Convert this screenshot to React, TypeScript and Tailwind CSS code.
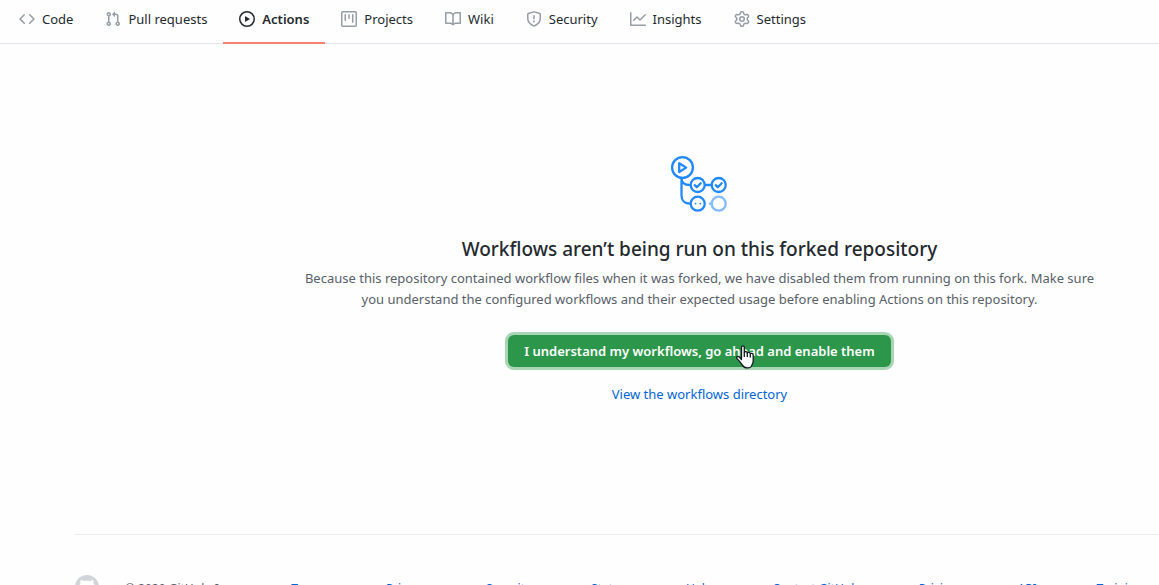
import type { ReactNode } from "react";

const icons = {
  code: "M4.72 3.22a.75.75 0 011.06 1.06L2.06 8l3.72 3.72a.75.75 0 11-1.06 1.06L.47 8.53a.75.75 0 010-1.06l4.25-4.25zm6.56 0a.75.75 0 10-1.06 1.06L13.94 8l-3.72 3.72a.75.75 0 101.06 1.06l4.25-4.25a.75.75 0 000-1.06l-4.25-4.25z",
  pull: "M7.177 3.073L9.573.677A.25.25 0 0110 .854v4.792a.25.25 0 01-.427.177L7.177 3.427a.25.25 0 010-.354zM3.75 2.5a.75.75 0 100 1.5.75.75 0 000-1.5zm-2.25.75a2.25 2.25 0 113 2.122v5.256a2.251 2.251 0 11-1.5 0V5.372A2.25 2.25 0 011.5 3.25zM11 2.5h-1V4h1a1 1 0 011 1v5.628a2.251 2.251 0 101.5 0V5A2.5 2.5 0 0011 2.5zm1 10.25a.75.75 0 111.5 0 .75.75 0 01-1.5 0zM3.75 12a.75.75 0 100 1.5.75.75 0 000-1.5z",
  play: "M1.5 8a6.5 6.5 0 1113 0 6.5 6.5 0 01-13 0zM8 0a8 8 0 100 16A8 8 0 008 0zM6.379 5.227A.25.25 0 006 5.442v5.117a.25.25 0 00.379.214l4.264-2.559a.25.25 0 000-.428L6.379 5.227z",
  project:
    "M1.75 0A1.75 1.75 0 000 1.75v12.5C0 15.216.784 16 1.75 16h12.5A1.75 1.75 0 0016 14.25V1.75A1.75 1.75 0 0014.25 0H1.75zM1.5 1.75a.25.25 0 01.25-.25h12.5a.25.25 0 01.25.25v12.5a.25.25 0 01-.25.25H1.75a.25.25 0 01-.25-.25V1.75zM11.75 3a.75.75 0 00-.75.75v7.5a.75.75 0 001.5 0v-7.5a.75.75 0 00-.75-.75zm-8.25.75a.75.75 0 011.5 0v5.5a.75.75 0 01-1.5 0v-5.5zM8 3a.75.75 0 00-.75.75v3.5a.75.75 0 001.5 0v-3.5A.75.75 0 008 3z",
  book: "M0 1.75A.75.75 0 01.75 1h4.253c1.227 0 2.317.59 3 1.501A3.744 3.744 0 0111.006 1h4.245a.75.75 0 01.75.75v10.5a.75.75 0 01-.75.75h-4.507a2.25 2.25 0 00-1.591.659l-.622.621a.75.75 0 01-1.06 0l-.622-.621A2.25 2.25 0 005.258 13H.75a.75.75 0 01-.75-.75V1.75zm8.755 3a2.25 2.25 0 012.25-2.25H14.5v9h-3.757c-.71 0-1.4.201-1.992.572l.004-7.322zm-1.504 7.324l.004-5.073-.002-2.253A2.25 2.25 0 005.003 2.5H1.5v9h3.757a3.75 3.75 0 011.994.574z",
  shield:
    "M7.467.133a1.75 1.75 0 011.066 0l5.25 1.68A1.75 1.75 0 0115 3.48V7c0 1.566-.32 3.182-1.303 4.682-.983 1.498-2.585 2.813-5.032 3.855a1.7 1.7 0 01-1.33 0c-2.447-1.042-4.049-2.357-5.032-3.855C1.32 10.182 1 8.566 1 7V3.48a1.75 1.75 0 011.217-1.667l5.25-1.68zm.61 1.429a.25.25 0 00-.153 0l-5.25 1.68a.25.25 0 00-.174.238V7c0 1.358.275 2.666 1.057 3.86.784 1.194 2.121 2.34 4.366 3.297a.2.2 0 00.154 0c2.245-.956 3.582-2.104 4.366-3.298C13.225 9.666 13.5 8.36 13.5 7V3.48a.25.25 0 00-.174-.237l-5.25-1.68zM9 10.5a1 1 0 11-2 0 1 1 0 012 0zm-.25-5.75a.75.75 0 10-1.5 0v3a.75.75 0 001.5 0v-3z",
  graph:
    "M1.5 1.75a.75.75 0 00-1.5 0v12.5c0 .414.336.75.75.75h14.5a.75.75 0 000-1.5H1.5V1.75zm14.28 2.53a.75.75 0 00-1.06-1.06L10 7.94 7.53 5.47a.75.75 0 00-1.06 0L3.22 8.72a.75.75 0 001.06 1.06L7 7.06l2.47 2.47a.75.75 0 001.06 0l5.25-5.25z",
  gear: "M7.429 1.525a6.593 6.593 0 011.142 0c.036.003.108.036.137.146l.289 1.105c.147.56.55.967.997 1.189.174.086.341.183.501.29.417.278.97.423 1.53.27l1.102-.303c.11-.03.175.016.195.046.219.31.41.641.573.989.014.031.022.11-.059.19l-.815.806c-.411.406-.562.957-.53 1.456a4.588 4.588 0 010 .582c-.032.499.119 1.05.53 1.456l.815.806c.08.08.073.159.059.19a6.494 6.494 0 01-.573.99c-.02.029-.086.074-.195.045l-1.103-.303c-.559-.153-1.112-.008-1.529.27-.16.107-.327.204-.5.29-.449.222-.851.628-.998 1.189l-.289 1.105c-.029.11-.101.143-.137.146a6.613 6.613 0 01-1.142 0c-.036-.003-.108-.037-.137-.146l-.289-1.105c-.147-.56-.55-.967-.997-1.189a4.502 4.502 0 01-.501-.29c-.417-.278-.97-.423-1.53-.27l-1.102.303c-.11.03-.175-.016-.195-.046a6.492 6.492 0 01-.573-.989c-.014-.031-.022-.11.059-.19l.815-.806c.411-.406.562-.957.53-1.456a4.587 4.587 0 010-.582c.032-.499-.119-1.05-.53-1.456l-.815-.806c-.08-.08-.073-.159-.059-.19a6.44 6.44 0 01.573-.99c.02-.029.086-.075.195-.045l1.103.303c.559.153 1.112.008 1.529-.27.16-.107.327-.204.5-.29.449-.222.851-.628.998-1.189l.289-1.105c.029-.11.101-.143.137-.146zM8 0c-.236 0-.47.01-.701.03-.743.065-1.29.615-1.458 1.261l-.29 1.106c-.017.066-.078.158-.211.224a5.994 5.994 0 00-.668.386c-.123.082-.233.09-.3.071L3.27 2.776c-.644-.177-1.392.02-1.82.63a7.977 7.977 0 00-.704 1.217c-.315.675-.111 1.422.363 1.891l.815.806c.05.048.098.147.088.294a6.084 6.084 0 000 .772c.01.147-.038.246-.088.294l-.815.806c-.474.469-.678 1.216-.363 1.891.2.428.436.835.704 1.218.428.609 1.176.806 1.82.63l1.103-.303c.066-.019.176-.011.299.071.213.143.436.272.668.386.133.066.194.158.212.224l.289 1.106c.169.646.715 1.196 1.458 1.26a8.094 8.094 0 001.402 0c.743-.064 1.29-.614 1.458-1.26l.29-1.106c.017-.066.078-.158.211-.224a5.98 5.98 0 00.668-.386c.123-.082.233-.09.3-.071l1.102.302c.644.177 1.392-.02 1.82-.63.268-.382.505-.789.704-1.217.315-.675.111-1.422-.364-1.891l-.814-.806c-.05-.048-.098-.147-.088-.294a6.1 6.1 0 000-.772c-.01-.147.039-.246.088-.294l.814-.806c.475-.469.679-1.216.364-1.891a7.992 7.992 0 00-.704-1.218c-.428-.609-1.176-.806-1.82-.63l-1.103.303c-.066.019-.176.011-.299-.071a5.991 5.991 0 00-.668-.386c-.133-.066-.194-.158-.212-.224L10.16 1.29C9.99.645 9.444.095 8.701.031A8.094 8.094 0 008 0zm1.5 8a1.5 1.5 0 11-3 0 1.5 1.5 0 013 0zM11 8a3 3 0 11-6 0 3 3 0 016 0z",
  mark: "M8 0C3.58 0 0 3.58 0 8c0 3.54 2.29 6.53 5.47 7.59.4.07.55-.17.55-.38 0-.19-.01-.82-.01-1.49-2.01.37-2.53-.49-2.69-.94-.09-.23-.48-.94-.82-1.13-.28-.15-.68-.52-.01-.53.63-.01 1.08.58 1.23.82.72 1.21 1.87.87 2.33.66.07-.52.28-.87.51-1.07-1.78-.2-3.64-.89-3.64-3.95 0-.87.31-1.59.82-2.15-.08-.2-.36-1.02.08-2.12 0 0 .67-.21 2.2.82.64-.18 1.32-.27 2-.27.68 0 1.36.09 2 .27 1.53-1.04 2.2-.82 2.2-.82.44 1.1.16 1.92.08 2.12.51.56.82 1.27.82 2.15 0 3.07-1.87 3.75-3.65 3.95.29.25.54.73.54 1.48 0 1.07-.01 1.93-.01 2.2 0 .21.15.46.55.38A8.013 8.013 0 0016 8c0-4.42-3.58-8-8-8z",
};

function Icon({ d, className }: { d: string; className: string }) {
  return (
    <svg viewBox="0 0 16 16" fill="currentColor" fillRule="evenodd" className={className} aria-hidden="true">
      <path d={d} />
    </svg>
  );
}

function Tab({ icon, active = false, children }: { icon: string; active?: boolean; children: ReactNode }) {
  return (
    <a
      href="#"
      aria-current={active ? "page" : undefined}
      className={
        active
          ? "flex h-11 items-center gap-[7px] border-b-2 border-[#f9826c] px-4 pb-1 font-semibold whitespace-nowrap"
          : "flex h-11 items-center gap-[7px] border-b-2 border-transparent px-4 pb-1 whitespace-nowrap"
      }
    >
      <Icon d={icon} className={active ? "size-4 shrink-0 text-[#24292e]" : "size-4 shrink-0 text-[#959da5]"} />
      <span>{children}</span>
    </a>
  );
}

function WorkflowArt() {
  return (
    <svg viewBox="0 0 60 60" className="size-[60px]" fill="none" stroke="#2188ff" strokeWidth="2.3" strokeLinecap="round" strokeLinejoin="round" aria-hidden="true">
      <circle cx="12.5" cy="13.5" r="10.4" />
      <path d="M9.2 9.2v8.8l7-4.4z" />
      <path d="M11.5 24v17.5c0 5 3.2 8.2 8.5 8.2M11.5 24c0 4.5 3 7 8.5 7M35 31h6.5" />
      <circle cx="27.7" cy="31" r="7" />
      <circle cx="48.7" cy="31" r="7" />
      <path d="M24.7 31.2l2.1 2 3.9-4M45.7 31.2l2.1 2 3.9-4" />
      <circle cx="27.7" cy="49.7" r="7" />
      <path d="M25.5 49.6h.01M30.3 49.6h.01" strokeWidth="1.8" />
      <g stroke="#82bbff">
        <circle cx="48.7" cy="49.7" r="7" />
        <path d="M39.8 49.7h1.5" />
      </g>
    </svg>
  );
}

function HandPointer() {
  return (
    <svg viewBox="0 0 18 24" className="absolute top-2.5 left-[228px] h-6 w-[18px]" fill="#fff" stroke="#111820" strokeWidth="1.3" strokeLinejoin="round" aria-hidden="true">
      <path d="M5.5 14.5V2.2C5.5.4 8.3.4 8.3 2.2V7.5c.4-1.2 2.9-1 3 .4.6-1 2.9-.6 3 .8.9-.8 2.9-.2 2.9 1.2v6c0 1.9-.7 2.8-1.3 4.1-.7 3.8-7.5 3.8-9.3.4C5.3 18.4 3.4 16 1.1 13.6c-1.1-1.3.5-2.8 1.9-1.8z" />
      <path d="M8.3 7.5v4.5M11.3 8v4M14.3 9v3.5" fill="none" />
    </svg>
  );
}

export default function App() {
  return (
    <div className="h-screen overflow-hidden bg-[#fefefe] font-['Noto_Sans','Open_Sans',sans-serif] text-[13px] leading-[21px] text-[#24292e]">
      <nav aria-label="Repository" className="h-11">
        <div className="flex h-11 bg-[linear-gradient(#e1e4e8,#e1e4e8)] bg-[length:100%_1px] bg-[position:0_43px] bg-no-repeat pl-[3px]">
          <Tab icon={icons.code}>Code</Tab>
          <Tab icon={icons.pull}>Pull requests</Tab>
          <Tab icon={icons.play} active>Actions</Tab>
          <Tab icon={icons.project}>Projects</Tab>
          <Tab icon={icons.book}>Wiki</Tab>
          <Tab icon={icons.shield}>Security</Tab>
          <Tab icon={icons.graph}>Insights</Tab>
          <Tab icon={icons.gear}>Settings</Tab>
        </div>
      </nav>

      <main className="flex flex-col items-center pt-[110px] pl-60 text-center">
        <WorkflowArt />
        <h1 className="mt-5 text-[19px] leading-[30px] font-medium">Workflows aren’t being run on this forked repository</h1>
        <p className="mt-1 max-w-[808px] text-[#586069]">
          Because this repository contained workflow files when it was forked, we have disabled them from running on this fork. Make sure
          you understand the configured workflows and their expected usage before enabling Actions on this repository.
        </p>
        <div className="relative mt-[25px]">
          <button type="button" className="h-8 rounded-md bg-[#2c974b] px-4 font-semibold whitespace-nowrap text-white ring-3 ring-[#a8d5b4]">
            I understand my workflows, go ahead and enable them
          </button>
          <HandPointer />
        </div>
        <a href="#" className="mt-[17px] text-[#0366d6]">View the workflows directory</a>
      </main>

      <footer className="mt-[129px] ml-[75px] border-t border-[#e8eaed] pt-10 text-[12px] leading-[18px] whitespace-nowrap text-[#586069]">
        <div className="flex">
          <Icon d={icons.mark} className="mr-[26px] size-6 shrink-0 text-[#d1d5da]" />
          <span className="mr-14 pt-[5px]">© 2020 GitHub, Inc.</span>
          <ul className="flex gap-[60px] pt-[5px] text-[#0366d6]">
            <li><a href="#">Terms</a></li>
            <li><a href="#">Privacy</a></li>
            <li><a href="#">Security</a></li>
            <li><a href="#">Status</a></li>
            <li><a href="#">Help</a></li>
            <li><a href="#">Contact GitHub</a></li>
            <li><a href="#">Pricing</a></li>
            <li><a href="#">API</a></li>
            <li><a href="#">Training</a></li>
          </ul>
        </div>
      </footer>
    </div>
  );
}
